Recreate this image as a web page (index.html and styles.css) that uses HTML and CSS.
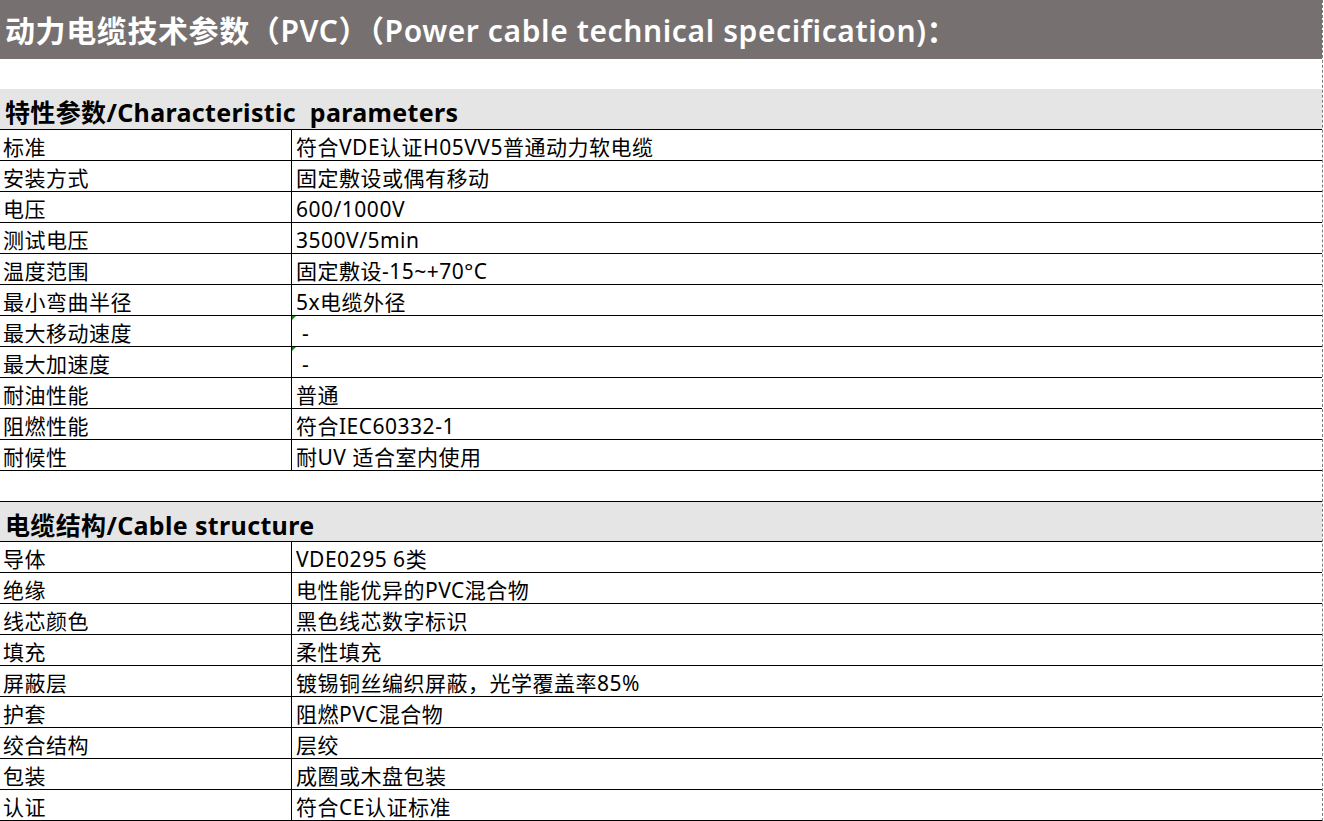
FILE: index.html
```html
<!DOCTYPE html>
<html lang="zh-CN">
<head>
<meta charset="utf-8">
<title>动力电缆技术参数</title>
<link rel="stylesheet" href="styles.css">
</head>
<body>
<div class="sheet">
  <div class="title">动力电缆技术参数（PVC）（Power cable technical specification)：</div>
  <div class="spacer"></div>
  <div class="section first">特性参数/Characteristic&nbsp; parameters</div>
  <div class="grid">
    <div class="k">标准</div><div class="v">符合VDE认证H05VV5普通动力软电缆</div>
    <div class="k">安装方式</div><div class="v">固定敷设或偶有移动</div>
    <div class="k">电压</div><div class="v">600/1000V</div>
    <div class="k">测试电压</div><div class="v">3500V/5min</div>
    <div class="k">温度范围</div><div class="v">固定敷设-15~+70°C</div>
    <div class="k">最小弯曲半径</div><div class="v">5x电缆外径</div>
    <div class="k">最大移动速度</div><div class="v mark">&nbsp;-</div>
    <div class="k">最大加速度</div><div class="v mark">&nbsp;-</div>
    <div class="k">耐油性能</div><div class="v">普通</div>
    <div class="k">阻燃性能</div><div class="v">符合IEC60332-1</div>
    <div class="k">耐候性</div><div class="v">耐UV 适合室内使用</div>
  </div>
  <div class="spacer small"></div>
  <div class="section second">电缆结构/Cable structure</div>
  <div class="grid">
    <div class="k">导体</div><div class="v">VDE0295 6类</div>
    <div class="k">绝缘</div><div class="v">电性能优异的PVC混合物</div>
    <div class="k">线芯颜色</div><div class="v">黑色线芯数字标识</div>
    <div class="k">填充</div><div class="v">柔性填充</div>
    <div class="k">屏蔽层</div><div class="v">镀锡铜丝编织屏蔽，光学覆盖率85%</div>
    <div class="k">护套</div><div class="v">阻燃PVC混合物</div>
    <div class="k">绞合结构</div><div class="v">层绞</div>
    <div class="k">包装</div><div class="v">成圈或木盘包装</div>
    <div class="k">认证</div><div class="v">符合CE认证标准</div>
  </div>
</div>
</body>
</html>
```
FILE: styles.css
```css
html, body {
  margin: 0;
  padding: 0;
  background: #ffffff;
}
body {
  font-family: "Noto Sans", "Noto Sans CJK SC", sans-serif;
  color: #000;
  overflow: hidden;
}
.sheet {
  width: 1322px;
  min-height: 821px;
  border-right: 1px dashed #7a7a7a;
}
.title {
  height: 59px;
  background: #767170;
  color: #ffffff;
  font-size: 30px;
  font-weight: 600;
  line-height: 62px;
  padding-left: 5px;
  white-space: nowrap;
  letter-spacing: 0.6px;
}
.spacer {
  height: 30px;
}
.spacer.small {
  height: 30px;
}
.section {
  height: 40px;
  background: #e5e5e5;
  border-bottom: 1px solid #000;
  font-size: 25px;
  font-weight: 700;
  line-height: 46px;
  padding-left: 5px;
  white-space: nowrap;
  letter-spacing: 0.35px;
}
.section.second {
  border-top: 1px solid #000;
  height: 39px;
}
.grid {
  display: grid;
  grid-template-columns: 292px 1fr;
  grid-auto-rows: 31px;
}
.k, .v {
  box-sizing: border-box;
  border-bottom: 1px solid #000;
  font-size: 21px;
  letter-spacing: 0.5px;
  line-height: 34px;
  height: 31px;
  white-space: nowrap;
  overflow: hidden;
}
.k {
  border-right: 1px solid #000;
  padding-left: 3px;
}
.v {
  padding-left: 4px;
  position: relative;
}
.v.mark::before {
  content: "";
  position: absolute;
  left: 0;
  top: 0;
  width: 0;
  height: 0;
  border-top: 4px solid #1a8a1a;
  border-right: 4px solid transparent;
}
```
